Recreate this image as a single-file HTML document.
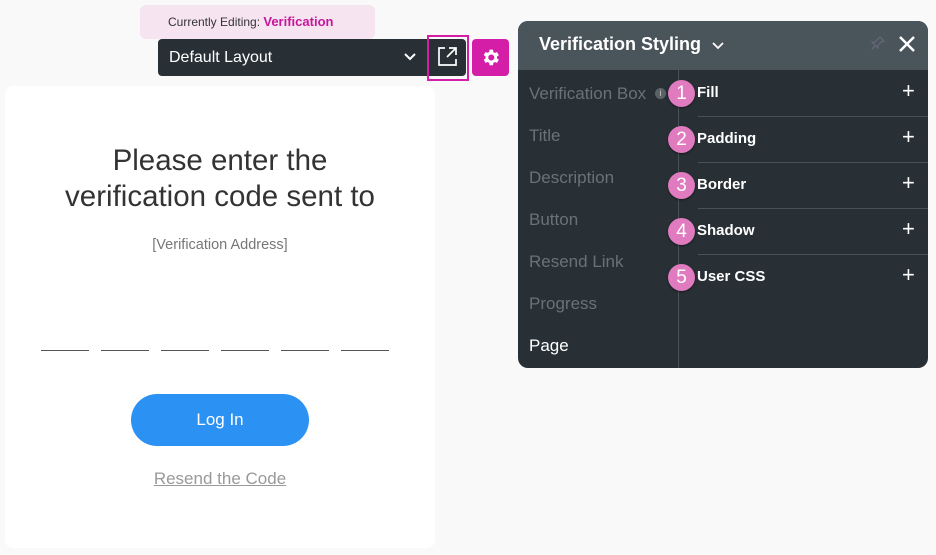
<!DOCTYPE html>
<html><head><style>
*{box-sizing:border-box;margin:0;padding:0}
body{width:936px;height:555px;background:#f9f9f9;font-family:"Liberation Sans",sans-serif;position:relative;overflow:hidden}
.abs{position:absolute}
.badge{left:140px;top:5px;width:235px;height:34px;background:#f7e4f1;border-radius:6px;font-size:12px;color:#333;line-height:34px;padding-left:28px}
.badge b{color:#c6169a;font-weight:bold;font-size:13px}
.dd{left:158px;top:39px;width:308px;height:37px;background:#283036;border-radius:4px;color:#fff;font-size:16px;line-height:37px;padding-left:11px}
.card{left:5px;top:86px;width:430px;height:462px;background:#fff;border-radius:8px}
.panel{left:518px;top:21px;width:410px;height:347px;background:#283036;border-radius:10px;overflow:hidden}
.ph{height:49px;background:#4a555b;color:#fff;font-weight:bold;font-size:18px;line-height:46px;padding-left:21px}
.left div{position:absolute;left:11px;font-size:17px;color:#6a7276}
.num{position:absolute;left:150px;width:27px;height:27px;border-radius:50%;background:#e07bbf;color:#fff;font-size:19px;text-align:center;line-height:27px;box-shadow:0 1px 2px rgba(0,0,0,.5)}
.item{position:absolute;left:179px;font-size:15px;color:#fff;font-weight:bold}
.plus{position:absolute;left:384px;font-size:22px;color:#fff;font-weight:normal}
.sep{position:absolute;left:180px;right:0;height:1px;background:#4a5257}
.line{position:absolute;top:350px;width:48px;height:1px;background:#555}
</style></head><body>
<div class="abs badge">Currently Editing: <b>Verification</b></div>
<div class="abs dd">Default Layout
<svg class="abs" style="left:246px;top:14px" width="12" height="9"><path d="M1 1l5 5 5-5" stroke="#fff" stroke-width="2" fill="none"/></svg></div>
<div class="abs" style="left:427px;top:35px;width:42px;height:46px;border:2px solid #d41ea8"></div>
<svg class="abs" style="left:437px;top:46px" width="21" height="21"><path d="M8 2H2v17h17v-6M12 2h7v7M19 2l-9 9" stroke="#fff" stroke-width="1.7" fill="none"/></svg>
<div class="abs" style="left:472px;top:39px;width:37px;height:37px;background:#d41ea8;border-radius:4px"></div>
<svg class="abs" style="left:480px;top:47px" width="21" height="21" viewBox="0 0 24 24"><path fill="#fff" d="M19.4 13a7.5 7.5 0 000-2l2.1-1.6-2-3.5-2.5 1a7.6 7.6 0 00-1.7-1L14.9 3h-4l-.4 2.7a7.6 7.6 0 00-1.7 1l-2.5-1-2 3.5L6.4 11a7.5 7.5 0 000 2l-2.1 1.6 2 3.5 2.5-1a7.6 7.6 0 001.7 1l.4 2.7h4l.4-2.7a7.6 7.6 0 001.7-1l2.5 1 2-3.5zM12.9 15.5a3.5 3.5 0 110-7 3.5 3.5 0 010 7z"/></svg>
<div class="abs card">
<div class="abs" style="left:0;width:430px;top:57px;text-align:center;font-size:29.5px;color:#333;line-height:36px">Please enter the<br>verification code sent to</div>
<div class="abs" style="left:0;width:430px;top:151px;text-align:center;font-size:14.5px;color:#777">[Verification Address]</div>
<div class="line" style="left:36px;top:264px"></div><div class="line" style="left:96px;top:264px"></div><div class="line" style="left:156px;top:264px"></div><div class="line" style="left:216px;top:264px"></div><div class="line" style="left:276px;top:264px"></div><div class="line" style="left:336px;top:264px"></div>
<div class="abs" style="left:126px;top:308px;width:178px;height:52px;border-radius:26px;background:#2b91f3;color:#fff;font-size:17px;text-align:center;line-height:52px">Log In</div>
<div class="abs" style="left:0;width:430px;top:383px;text-align:center;font-size:17px;color:#999;text-decoration:underline">Resend the Code</div>
</div>
<div class="abs panel">
<div class="ph">Verification Styling <svg width="12" height="8" style="margin-left:6px"><path d="M1 1l5 5 5-5" stroke="#fff" stroke-width="1.8" fill="none"/></svg></div>
<svg class="abs" style="left:352px;top:14px" width="16" height="16"><path d="M10 2l4 4-3 1-3 3 0 3-6-6 3 0 3-3zM5 11l-3 3" stroke="#667" stroke-width="1.3" fill="none"/></svg>
<svg class="abs" style="left:380px;top:14px" width="18" height="18"><path d="M2 2l14 14M16 2L2 16" stroke="#fff" stroke-width="2.5"/></svg>
<div class="abs" style="left:160px;top:49px;width:1px;height:298px;background:#4a5257"></div>
<div class="left">
<div style="top:63px">Verification Box</div><div style="top:105px">Title</div><div style="top:147px">Description</div><div style="top:189px">Button</div><div style="top:231px">Resend Link</div><div style="top:273px">Progress</div><div style="top:315px;color:#fff">Page</div></div>
<div class="abs" style="left:137px;top:67px;width:11px;height:11px;border-radius:50%;background:#5a6266;color:#ccc;font-size:9px;text-align:center;line-height:11px">i</div>
<div class="num" style="top:59px">1</div><div class="item" style="top:63px">Fill</div><div class="plus" style="top:57px">+</div><div class="sep" style="top:95px"></div>
<div class="num" style="top:105px">2</div><div class="item" style="top:109px">Padding</div><div class="plus" style="top:103px">+</div><div class="sep" style="top:141px"></div>
<div class="num" style="top:151px">3</div><div class="item" style="top:155px">Border</div><div class="plus" style="top:149px">+</div><div class="sep" style="top:187px"></div>
<div class="num" style="top:197px">4</div><div class="item" style="top:201px">Shadow</div><div class="plus" style="top:195px">+</div><div class="sep" style="top:233px"></div>
<div class="num" style="top:243px">5</div><div class="item" style="top:247px">User CSS</div><div class="plus" style="top:241px">+</div>
</div>
</body></html>
